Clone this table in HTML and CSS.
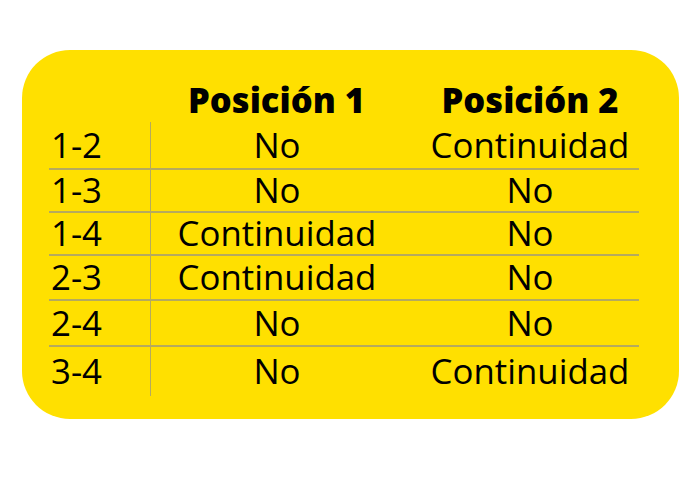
FILE: index.html
```html
<!DOCTYPE html>
<html lang="es">
<head>
<meta charset="utf-8">
<link rel="stylesheet" href="styles.css">
</head>
<body>
<div class="card">
  <div class="grid">
    <div class="cell head empty"></div>
    <div class="cell head c1">Posición 1</div>
    <div class="cell head c2">Posición 2</div>

    <div class="cell label line">1-2</div>
    <div class="cell c1 line">No</div>
    <div class="cell c2 line">Continuidad</div>

    <div class="cell label line">1-3</div>
    <div class="cell c1 line">No</div>
    <div class="cell c2 line">No</div>

    <div class="cell label line">1-4</div>
    <div class="cell c1 line">Continuidad</div>
    <div class="cell c2 line">No</div>

    <div class="cell label line">2-3</div>
    <div class="cell c1 line">Continuidad</div>
    <div class="cell c2 line">No</div>

    <div class="cell label line">2-4</div>
    <div class="cell c1 line">No</div>
    <div class="cell c2 line">No</div>

    <div class="cell label">3-4</div>
    <div class="cell c1">No</div>
    <div class="cell c2">Continuidad</div>
  </div>
</div>
</body>
</html>
```

FILE: styles.css
```css
html, body {
  margin: 0;
  padding: 0;
  background: #ffffff;
}

body {
  font-family: "Open Sans", "Noto Sans", sans-serif;
  color: #000;
}

.card {
  margin: 50px 0 0 22px;
  width: 657px;
  height: 369px;
  box-sizing: border-box;
  padding: 32px 0 0 27px;
  background: #ffe000;
  border-radius: 48px;
}

.grid {
  display: grid;
  grid-template-columns: 101px 263px 226px;
  grid-template-rows: 40px 48px 43px 43px 45px 46px 49px;
}

.cell {
  display: flex;
  align-items: center;
  font-size: 34.8px;
  font-weight: 500;
  line-height: 1;
  white-space: nowrap;
}

.line {
  border-bottom: 2px solid #b5aa5e;
}

.label {
  padding-left: 2px;
}

.c1,
.c2 {
  justify-content: center;
}

.c1 {
  border-left: 1.5px solid #b5aa5e;
  padding-right: 10px;
}

.c2 {
  padding-left: 8px;
}

.head {
  font-weight: 800;
  font-size: 34.5px;
  align-items: flex-end;
  padding-bottom: 5px;
  border-left: none;
}
```
